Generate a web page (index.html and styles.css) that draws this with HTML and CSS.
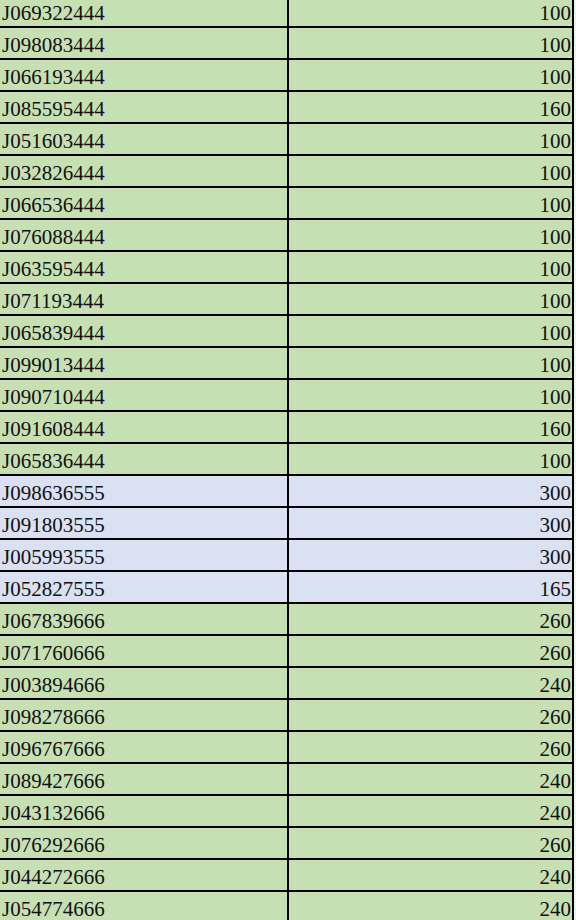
FILE: index.html
```html
<!DOCTYPE html>
<html>
<head>
<meta charset="utf-8">
<link rel="stylesheet" href="styles.css">
</head>
<body>
<div class="sheet">
  <div class="row g"><div class="c id">J069322444</div><div class="c num">100</div></div>
  <div class="row g"><div class="c id">J098083444</div><div class="c num">100</div></div>
  <div class="row g"><div class="c id">J066193444</div><div class="c num">100</div></div>
  <div class="row g"><div class="c id">J085595444</div><div class="c num">160</div></div>
  <div class="row g"><div class="c id">J051603444</div><div class="c num">100</div></div>
  <div class="row g"><div class="c id">J032826444</div><div class="c num">100</div></div>
  <div class="row g"><div class="c id">J066536444</div><div class="c num">100</div></div>
  <div class="row g"><div class="c id">J076088444</div><div class="c num">100</div></div>
  <div class="row g"><div class="c id">J063595444</div><div class="c num">100</div></div>
  <div class="row g"><div class="c id">J071193444</div><div class="c num">100</div></div>
  <div class="row g"><div class="c id">J065839444</div><div class="c num">100</div></div>
  <div class="row g"><div class="c id">J099013444</div><div class="c num">100</div></div>
  <div class="row g"><div class="c id">J090710444</div><div class="c num">100</div></div>
  <div class="row g"><div class="c id">J091608444</div><div class="c num">160</div></div>
  <div class="row g"><div class="c id">J065836444</div><div class="c num">100</div></div>
  <div class="row b"><div class="c id">J098636555</div><div class="c num">300</div></div>
  <div class="row b"><div class="c id">J091803555</div><div class="c num">300</div></div>
  <div class="row b"><div class="c id">J005993555</div><div class="c num">300</div></div>
  <div class="row b"><div class="c id">J052827555</div><div class="c num">165</div></div>
  <div class="row g"><div class="c id">J067839666</div><div class="c num">260</div></div>
  <div class="row g"><div class="c id">J071760666</div><div class="c num">260</div></div>
  <div class="row g"><div class="c id">J003894666</div><div class="c num">240</div></div>
  <div class="row g"><div class="c id">J098278666</div><div class="c num">260</div></div>
  <div class="row g"><div class="c id">J096767666</div><div class="c num">260</div></div>
  <div class="row g"><div class="c id">J089427666</div><div class="c num">240</div></div>
  <div class="row g"><div class="c id">J043132666</div><div class="c num">240</div></div>
  <div class="row g"><div class="c id">J076292666</div><div class="c num">260</div></div>
  <div class="row g"><div class="c id">J044272666</div><div class="c num">240</div></div>
  <div class="row g"><div class="c id">J054774666</div><div class="c num">240</div></div>
</div>
</body>
</html>
```
FILE: styles.css
```css
html, body {
  margin: 0;
  padding: 0;
  background: #eef4e8;
  overflow: hidden;
}
.sheet {
  width: 574px;
  box-sizing: border-box;
  border-right: 2px solid #000;
  margin-top: -4px;
  font-family: "Liberation Serif", "DejaVu Serif", serif;
  font-size: 21px;
  color: #111;
}
.row {
  display: grid;
  grid-template-columns: 289px 283px;
  height: 32px;
  box-sizing: border-box;
  border-bottom: 2px solid #000;
}
.row.g { background: #c6e0b4; }
.row.b { background: #d9e1f2; }
.c {
  line-height: 30px;
  padding-top: 2px;
  box-sizing: border-box;
  white-space: nowrap;
}
.id {
  padding-left: 2px;
  border-right: 2px solid #000;
}
.num {
  text-align: right;
  padding-right: 1px;
}
```
